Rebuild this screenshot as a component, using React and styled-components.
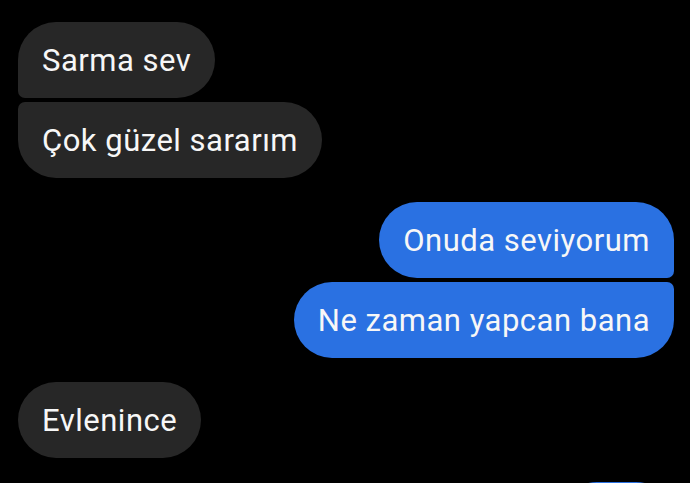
import React from "react";
import styled, { createGlobalStyle, css } from "styled-components";

const GlobalStyle = createGlobalStyle`
  html, body {
    margin: 0;
    padding: 0;
    background: #000;
    height: 100%;
    overflow: hidden;
  }
  #root {
    height: 100%;
  }
`;

const Thread = styled.main`
  height: 483px;
  overflow: hidden;
  background: #000;
  box-sizing: border-box;
  padding: 22px 16px 0 18px;
  display: flex;
  flex-direction: column;
  gap: 24px;
  font-family: Roboto, "Noto Sans", "Liberation Sans", sans-serif;
`;

const Group = styled.section`
  display: flex;
  flex-direction: column;
  gap: 4px;
  align-items: ${(p) => (p.$mine ? "flex-end" : "flex-start")};
`;

const BIG = "38px";
const SMALL = "7px";

const radiusFor = (mine, pos) => {
  const near = (isTop) => {
    if (pos === "single") return BIG;
    if (pos === "first") return isTop ? BIG : SMALL;
    if (pos === "last") return isTop ? SMALL : BIG;
    return SMALL;
  };
  // order: top-left top-right bottom-right bottom-left
  if (mine) return `${BIG} ${near(true)} ${near(false)} ${BIG}`;
  return `${near(true)} ${BIG} ${BIG} ${near(false)}`;
};

const Bubble = styled.div`
  height: 76px;
  min-width: ${(p) => p.$minWidth || 0}px;
  box-sizing: border-box;
  padding: 0 24px;
  display: flex;
  align-items: center;
  flex-shrink: 0;
  font-size: 31px;
  line-height: 1;
  color: #f7f7f7;
  white-space: nowrap;
  letter-spacing: 0.5px;
  ${(p) =>
    p.$mine
      ? css`
          background: #2a71e2;
        `
      : css`
          background: #272727;
        `}
  border-radius: ${(p) => radiusFor(p.$mine, p.$pos)};
`;

const conversation = [
  { mine: false, messages: ["Sarma sev", "Çok güzel sararım"] },
  { mine: true, messages: ["Onuda seviyorum", "Ne zaman yapcan bana"] },
  { mine: false, messages: ["Evlenince"] },
  { mine: true, messages: [""], minWidth: 115 },
];

const posOf = (i, n) => (n === 1 ? "single" : i === 0 ? "first" : i === n - 1 ? "last" : "middle");

export default function App() {
  return (
    <>
      <GlobalStyle />
      <Thread>
        {conversation.map((g, gi) => (
          <Group key={gi} $mine={g.mine}>
            {g.messages.map((m, mi) => (
              <Bubble
                key={mi}
                $mine={g.mine}
                $minWidth={g.minWidth}
                $pos={posOf(mi, g.messages.length)}
              >
                {m}
              </Bubble>
            ))}
          </Group>
        ))}
      </Thread>
    </>
  );
}
